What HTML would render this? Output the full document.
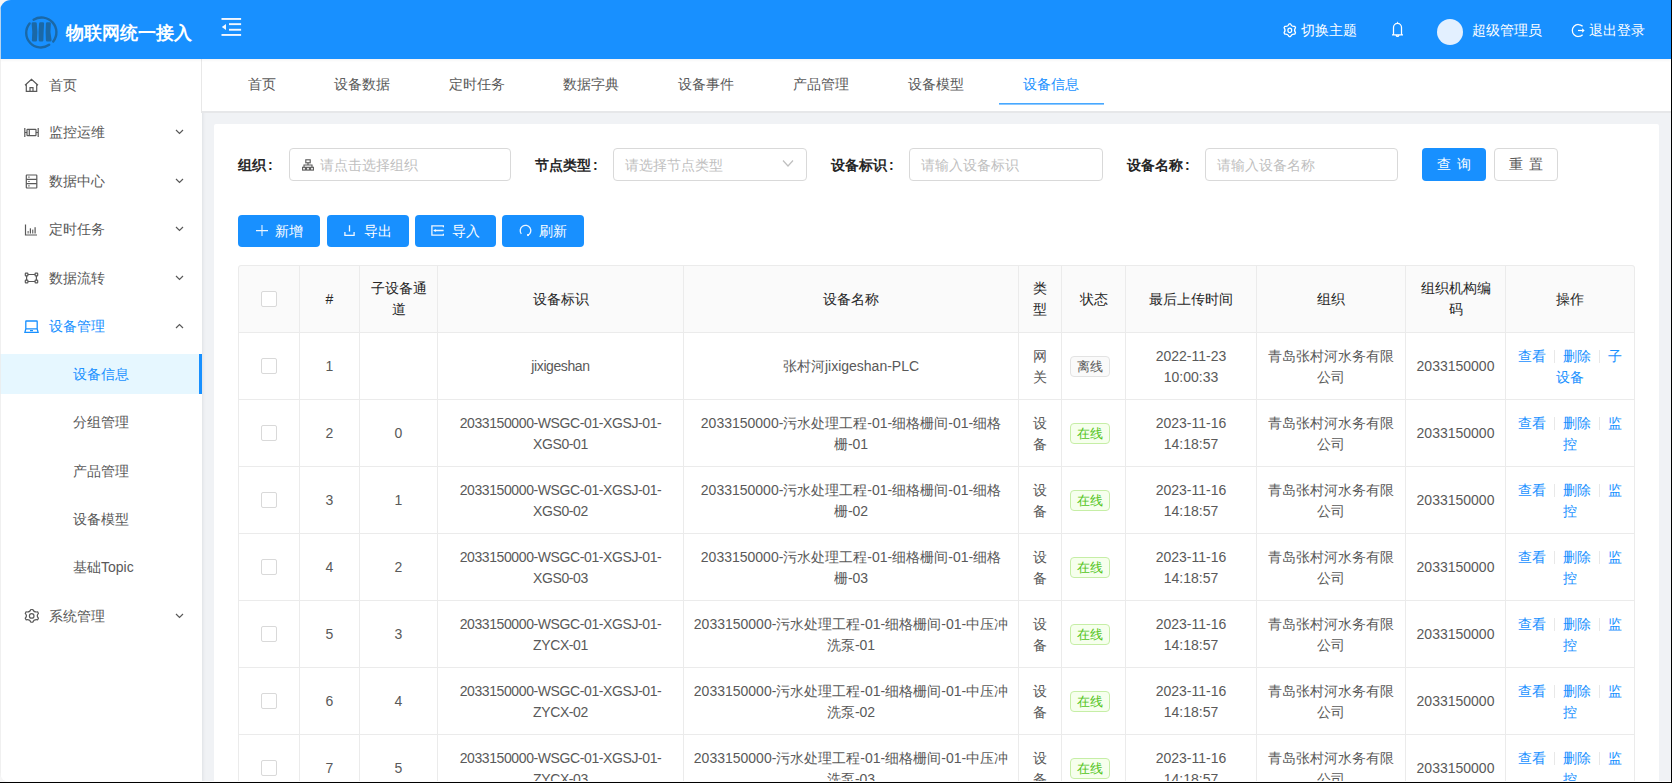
<!DOCTYPE html><html><head><meta charset="utf-8"><title>设备信息</title><style>
*{box-sizing:border-box;margin:0;padding:0}
html,body{width:1672px;height:783px;overflow:hidden;background:#f6f6f6}
body{position:relative;font-family:"Liberation Sans",sans-serif;font-size:14px;color:#595959}
.abs{position:absolute}
#frame{position:absolute;left:0;top:0;width:1671px;height:782px;background:#f0f2f5;border-top-left-radius:11px;border-bottom-left-radius:9px;overflow:hidden}
#header{position:absolute;left:0;top:0;width:1671px;height:59px;background:#1890ff;z-index:2;box-shadow:0 1px 3px rgba(0,21,41,.06)}
#sider{position:absolute;left:0;top:59px;width:202px;height:723px;background:#fff;box-shadow:1px 0 3px rgba(0,21,41,.08)}
.mi{position:absolute;left:0;width:199px;height:40px;line-height:40px;white-space:nowrap;color:#595959}
.mi .ic{position:absolute;left:24px;top:13px;width:15px;height:15px}
.mi .tx{position:absolute;left:49px;top:0}
.mi .ar{position:absolute;left:175px;top:17px;width:9px;height:6px}
.sub .tx{left:73px}
#tabs{position:absolute;left:201px;top:59px;width:1470px;height:54px;background:#fff;border-bottom:2px solid #e6e7e9;border-left:1px solid #e8e8e8}
.tab{position:absolute;top:0;height:52px;line-height:50px;color:#595959;white-space:nowrap}
#card{position:absolute;left:214px;top:124px;width:1445px;height:700px;background:#fff;border-radius:2px}
.lbl{position:absolute;font-weight:bold;color:#262626;white-space:nowrap;line-height:20px}
.inp{position:absolute;border:1px solid #d9d9d9;border-radius:4px;background:#fff;height:33px}
.ph{position:absolute;color:#bfbfbf;white-space:nowrap;line-height:20px}
.btn{position:absolute;top:215px;height:32px;background:#1890ff;border-radius:4px;color:#fff;white-space:nowrap}
.btn .bt{position:absolute;top:6px;line-height:20px}
.vl{position:absolute;width:1px;background:#ebebeb}
.hl{position:absolute;height:1px;background:#ebebeb}
.cell{position:absolute;display:flex;align-items:center;justify-content:center;text-align:center;line-height:21px;color:#595959;white-space:nowrap}
.th{color:#262626}
.ml{line-height:21.5px;padding-top:2.5px}
.cb{position:absolute;width:16px;height:16px;border:1px solid #d9d9d9;border-radius:2px;background:#fff}
.tag{display:inline-block;margin-right:8px;height:21px;line-height:21.5px;font-size:12.5px;padding:0 6px;border-radius:4px;border:1px solid #e3e3e3;background:#fafafa;color:#595959}
.tag.on{border-color:#c6eea6;background:#f6ffed;color:#52c41a}
.lk{color:#1890ff}
.dv{display:inline-block;width:1px;height:13px;background:#e8e8e8;margin:0 8px;vertical-align:-2px}
</style></head><body>
<div id="frame">
<div id="header">
<svg class="abs" style="left:23px;top:15px" width="36" height="36" viewBox="0 0 36 36">
<g fill="none" stroke="#1b68a6" stroke-width="2.4" stroke-linecap="round">
<path d="M10.60 4.71 A14.9 14.9 0 0 1 30.24 26.52"/>
<path d="M6.62 8.47 A14.6 14.6 0 0 0 26.17 29.81"/>
</g>
<g fill="#1b68a6">
<path d="M8.6 8.6 Q8.6 7.3 10.2 7.3 H12.3 Q13.8 7.3 13.8 8.6 Q14.9 17 14 25.3 Q14 26.6 12.6 26.6 H10.3 Q8.9 26.6 8.9 25.3 Q9.8 17 8.6 8.6Z"/>
<path d="M16.1 8.6 Q16.1 7.3 17.5 7.3 H19.8 Q21.1 7.3 21.1 8.6 Q20.6 17 20.4 25.3 Q20.4 26.6 19.1 26.6 H17 Q15.7 26.6 15.7 25.3 Q15.2 17 16.1 8.6Z"/>
<path d="M22.9 8.6 Q22.9 7.3 24.3 7.3 H26.4 Q27.9 7.3 27.9 8.6 Q26.6 17 28.6 25.3 Q28.6 26.6 27.2 26.6 H24.3 Q22.9 26.6 22.9 25.3 Q22.3 17 22.9 8.6Z"/>
</g></svg>
<div class="abs" style="left:66px;top:21px;font-size:18px;font-weight:bold;color:#fff;line-height:24px;white-space:nowrap">物联网统一接入</div>
<svg class="abs" style="left:221px;top:17px" width="22" height="20" viewBox="0 0 22 20">
<g fill="#f2f7ff"><rect x="0.5" y="1" width="19.6" height="1.9"/><rect x="8" y="6.2" width="12.1" height="1.9"/><rect x="8" y="11.8" width="12.1" height="1.9"/><rect x="0.5" y="17" width="19.6" height="1.9"/>
<path d="M0.8 9.9 L5 6.9 L5 13 Z"/></g></svg>
<svg class="abs" style="left:1283px;top:23px" width="14" height="15" viewBox="0 0 14 15"><g fill="none" stroke="#fff" stroke-width="1.25" stroke-linejoin="round">
<path d="M6.05 0.85 L7.55 0.85 Q8.64 3.99 11.82 3.40 L12.58 4.70 Q10.47 7.25 12.58 9.80 L11.82 11.10 Q8.64 10.51 7.55 13.65 L6.05 13.65 Q4.96 10.51 1.78 11.10 L1.02 9.80 Q3.13 7.25 1.02 4.70 L1.78 3.40 Q4.96 3.99 6.05 0.85 L7.55 0.85 Z"/><ellipse cx="6.8" cy="7.3" rx="1.9" ry="2.2"/></g></svg>
<div class="abs" style="left:1301px;top:20px;color:#fff;line-height:20px;white-space:nowrap">切换主题</div>
<svg class="abs" style="left:1391px;top:20px" width="13" height="18" viewBox="0 0 13 18"><g fill="none" stroke="#fff" stroke-width="1.25">
<path d="M2.5 14.8 V7.6 A4 4.2 0 0 1 10.5 7.6 V14.8 M1 14.8 H12 M5.1 15.4 A1.45 1.45 0 0 0 7.9 15.4"/></g><path d="M6.5 1.2 L7.3 3.6 H5.7Z" fill="#fff"/></svg>
<div class="abs" style="left:1437px;top:19px;width:26px;height:26px;border-radius:50%;background:#e3f0ff"></div>
<div class="abs" style="left:1472px;top:20px;color:#fff;line-height:20px;white-space:nowrap">超级管理员</div>
<svg class="abs" style="left:1571px;top:23px" width="15" height="15" viewBox="0 0 15 15"><g fill="none" stroke="#fff" stroke-width="1.25">
<path d="M11.6 3.3 A6 6 0 1 0 11.6 11.7"/><path d="M7 7.5 H11.8"/></g><path d="M11.2 5.3 L13.6 7.5 L11.2 9.7Z" fill="#fff"/></svg>
<div class="abs" style="left:1589px;top:20px;color:#fff;line-height:20px;white-space:nowrap">退出登录</div>
</div>
<div id="sider">
<div class="mi" style="top:6px;color:#595959"><svg class="ic" viewBox="0 0 15 15"><g fill="none" stroke="#595959" stroke-width="1.2"><path d="M1 7.3 L7.5 1.2 L14 7.3 M2.3 6.2 V13.4 H12.7 V6.2 M6 13.4 V9.6 H9 V13.4"/></g></svg><span class="tx">首页</span></div>
<div class="mi" style="top:53px;color:#595959"><svg class="ic" viewBox="0 0 15 15"><g fill="none" stroke="#595959" stroke-width="1.2"><path d="M0.8 3 V12 M14.2 3 V12 M0.8 7.5 H3 M12 7.5 H14.2"/><rect x="3" y="4.3" width="9" height="6.4" rx="0.6"/><path d="M5.3 4.3 V10.7"/></g></svg><span class="tx">监控运维</span><svg class="ar" viewBox="0 0 9 6"><path d="M1 1 L4.5 4.5 L8 1" fill="none" stroke="#595959" stroke-width="1.2"/></svg></div>
<div class="mi" style="top:102px;color:#595959"><svg class="ic" viewBox="0 0 15 15"><g fill="none" stroke="#595959" stroke-width="1.2"><rect x="2.3" y="1" width="10.5" height="13" rx="0.5"/><path d="M2.3 5.3 H12.8 M2.3 9.7 H12.8 M4.3 3.2 H5.6 M4.3 7.5 H5.6 M4.3 11.9 H5.6"/></g></svg><span class="tx">数据中心</span><svg class="ar" viewBox="0 0 9 6"><path d="M1 1 L4.5 4.5 L8 1" fill="none" stroke="#595959" stroke-width="1.2"/></svg></div>
<div class="mi" style="top:150px;color:#595959"><svg class="ic" viewBox="0 0 15 15"><g fill="none" stroke="#595959" stroke-width="1.2"><path d="M1.5 2.5 V13 H13"/></g><g fill="#595959"><rect x="3.6" y="9" width="1" height="2.5"/><rect x="5.8" y="6.3" width="1.2" height="5.2"/><rect x="8.2" y="7.6" width="1.1" height="3.9"/><rect x="10.5" y="5.2" width="1.2" height="6.3"/></g></svg><span class="tx">定时任务</span><svg class="ar" viewBox="0 0 9 6"><path d="M1 1 L4.5 4.5 L8 1" fill="none" stroke="#595959" stroke-width="1.2"/></svg></div>
<div class="mi" style="top:199px;color:#595959"><svg class="ic" viewBox="0 0 15 15"><g fill="none" stroke="#595959" stroke-width="1.2"><rect x="1.3" y="2.2" width="2.6" height="2.6" rx="0.6"/><rect x="11.1" y="2.2" width="2.6" height="2.6" rx="0.6"/><rect x="1.3" y="9.2" width="2.6" height="2.6" rx="0.6"/><rect x="11.1" y="9.2" width="2.6" height="2.6" rx="0.6"/><path d="M3.9 3.5 H11.1 M3.9 10.5 H11.1 M2.6 4.8 V9.2 M12.4 4.8 V9.2"/></g></svg><span class="tx">数据流转</span><svg class="ar" viewBox="0 0 9 6"><path d="M1 1 L4.5 4.5 L8 1" fill="none" stroke="#595959" stroke-width="1.2"/></svg></div>
<div class="mi" style="top:247px;color:#1890ff"><svg class="ic" viewBox="0 0 15 15"><g fill="none" stroke="#1890ff" stroke-width="1.3"><rect x="1.8" y="2" width="11.4" height="7.8" rx="0.4"/><path d="M1.8 9.8 L0.9 13.3 H14.1 L13.2 9.8"/><path d="M6 11.6 H9"/></g></svg><span class="tx">设备管理</span><svg class="ar" viewBox="0 0 9 6"><path d="M1 5 L4.5 1.5 L8 5" fill="none" stroke="#595959" stroke-width="1.2"/></svg></div>
<div class="mi sub" style="top:295px;width:202px;background:#e6f7ff;color:#1890ff"><span class="tx">设备信息</span><div class="abs" style="right:0;top:0;width:3px;height:40px;background:#1890ff"></div></div>
<div class="mi sub" style="top:343px"><span class="tx">分组管理</span></div>
<div class="mi sub" style="top:392px"><span class="tx">产品管理</span></div>
<div class="mi sub" style="top:440px"><span class="tx">设备模型</span></div>
<div class="mi sub" style="top:488px"><span class="tx">基础Topic</span></div>
<div class="mi" style="top:537px"><svg class="ic" viewBox="0 0 15 15"><g fill="none" stroke="#595959" stroke-width="1.2" stroke-linejoin="round"><path d="M6.95 0.45 L8.75 0.45 Q9.96 3.59 13.64 2.85 L14.46 4.45 Q12.07 6.85 14.46 9.25 L13.64 10.85 Q9.96 10.11 8.75 13.25 L6.95 13.25 Q5.74 10.11 2.06 10.85 L1.24 9.25 Q3.63 6.85 1.24 4.45 L2.06 2.85 Q5.74 3.59 6.95 0.45 L8.75 0.45 Z"/><circle cx="7.7" cy="6.9" r="2.3"/></g></svg><span class="tx">系统管理</span><svg class="ar" viewBox="0 0 9 6"><path d="M1 1 L4.5 4.5 L8 1" fill="none" stroke="#595959" stroke-width="1.2"/></svg></div>
</div>
<div id="tabs">
<div class="tab" style="left:45.6px;color:#595959">首页</div>
<div class="tab" style="left:132.3px;color:#595959">设备数据</div>
<div class="tab" style="left:246.6px;color:#595959">定时任务</div>
<div class="tab" style="left:361.0px;color:#595959">数据字典</div>
<div class="tab" style="left:476.0px;color:#595959">设备事件</div>
<div class="tab" style="left:591.0px;color:#595959">产品管理</div>
<div class="tab" style="left:706.0px;color:#595959">设备模型</div>
<div class="tab" style="left:821.0px;color:#1890ff">设备信息</div>
<div class="abs" style="left:797px;top:44px;width:105px;height:1px;background:#47a8ff"></div><div class="abs" style="left:797px;top:45px;width:105px;height:1px;background:#8cc8ff"></div>
</div>
<div id="card"></div>
<div class="lbl" style="left:238px;top:155px">组织<span style="margin-left:2px">:</span></div>
<div class="inp" style="left:289px;top:148px;width:222px"></div>
<svg class="abs" style="left:302px;top:159px" width="12" height="12" viewBox="0 0 12 12"><g fill="none" stroke="#595959" stroke-width="1.1"><rect x="3.8" y="0.8" width="4.4" height="3"/><path d="M6 3.8 V6 M2 8.3 V6 H10 V8.3"/><rect x="0.6" y="8.3" width="2.8" height="2.8"/><rect x="4.6" y="8.3" width="2.8" height="2.8"/><rect x="8.6" y="8.3" width="2.8" height="2.8"/></g></svg>
<div class="ph" style="left:320px;top:155px">请点击选择组织</div>
<div class="lbl" style="left:535px;top:155px">节点类型<span style="margin-left:2px">:</span></div>
<div class="inp" style="left:613px;top:148px;width:194px"></div>
<div class="ph" style="left:625px;top:155px">请选择节点类型</div>
<svg class="abs" style="left:782px;top:159px" width="12" height="9" viewBox="0 0 12 9"><path d="M1 1.5 L6 7 L11 1.5" fill="none" stroke="#bfbfbf" stroke-width="1.2"/></svg>
<div class="lbl" style="left:831px;top:155px">设备标识<span style="margin-left:2px">:</span></div>
<div class="inp" style="left:909px;top:148px;width:194px"></div>
<div class="ph" style="left:921px;top:155px">请输入设备标识</div>
<div class="lbl" style="left:1127px;top:155px">设备名称<span style="margin-left:2px">:</span></div>
<div class="inp" style="left:1205px;top:148px;width:193px"></div>
<div class="ph" style="left:1217px;top:155px">请输入设备名称</div>
<div class="abs" style="left:1422px;top:148px;width:64px;height:33px;background:#1890ff;border-radius:4px;color:#fff;text-align:center;line-height:32px;letter-spacing:6px;text-indent:6px">查询</div>
<div class="abs" style="left:1494px;top:148px;width:64px;height:33px;background:#fff;border:1px solid #d9d9d9;border-radius:4px;color:#595959;text-align:center;line-height:30px;letter-spacing:6px;text-indent:6px">重置</div>
<div class="btn" style="left:238px;width:82px"><svg class="abs" style="left:18px;top:10px" width="12" height="11" viewBox="0 0 12 11"><path d="M6 0 V11 M0 5.6 H12" stroke="#eef6ff" stroke-width="1.05"/></svg><span class="bt" style="left:37px">新增</span></div>
<div class="btn" style="left:327px;width:82px"><svg class="abs" style="left:17px;top:10px" width="11" height="11" viewBox="0 0 11 11"><path d="M5.5 0.2 V6.6 M0.9 7 V10.3 H10.1 V7" fill="none" stroke="#f2f8ff" stroke-width="1.3"/></svg><span class="bt" style="left:37px">导出</span></div>
<div class="btn" style="left:415px;width:81px"><svg class="abs" style="left:16px;top:10px" width="13" height="11" viewBox="0 0 13 11"><path d="M12.4 2.3 V0.8 H0.9 V10.2 H12.4 V8.7 M4 5.5 H12.6" fill="none" stroke="#eef6ff" stroke-width="1.3"/><path d="M2.2 5.5 L4.6 4 V7 Z" fill="#fff"/></svg><span class="bt" style="left:37px">导入</span></div>
<div class="btn" style="left:502px;width:82px"><svg class="abs" style="left:17px;top:9px" width="13" height="13" viewBox="0 0 13 13"><path d="M2.32 9.86 A5.3 5.3 0 1 1 8.99 11.28" fill="none" stroke="#eef6ff" stroke-width="1.3"/><circle cx="9" cy="11.1" r="1.05" fill="#fff"/></svg><span class="bt" style="left:37px">刷新</span></div>
<div class="abs" style="left:238px;top:265px;width:1397px;height:67px;background:#fafafa;border-top-left-radius:3px;border-top-right-radius:3px"></div>
<div class="vl" style="left:299px;top:265px;height:520px"></div>
<div class="vl" style="left:359px;top:265px;height:520px"></div>
<div class="vl" style="left:437px;top:265px;height:520px"></div>
<div class="vl" style="left:683px;top:265px;height:520px"></div>
<div class="vl" style="left:1018px;top:265px;height:520px"></div>
<div class="vl" style="left:1061px;top:265px;height:520px"></div>
<div class="vl" style="left:1125px;top:265px;height:520px"></div>
<div class="vl" style="left:1256px;top:265px;height:520px"></div>
<div class="vl" style="left:1405px;top:265px;height:520px"></div>
<div class="vl" style="left:1505px;top:265px;height:520px"></div>
<div class="abs" style="left:238px;top:265px;width:1397px;height:540px;border:1px solid #ebebeb;border-radius:3px"></div>
<div class="hl" style="left:238px;top:332px;width:1397px"></div>
<div class="hl" style="left:238px;top:399px;width:1397px"></div>
<div class="hl" style="left:238px;top:466px;width:1397px"></div>
<div class="hl" style="left:238px;top:533px;width:1397px"></div>
<div class="hl" style="left:238px;top:600px;width:1397px"></div>
<div class="hl" style="left:238px;top:667px;width:1397px"></div>
<div class="hl" style="left:238px;top:734px;width:1397px"></div>
<div class="hl" style="left:238px;top:801px;width:1397px"></div>
<div class="cell th" style="left:239px;top:266px;width:60px;height:66px;"><span class="cb" style="position:static;display:inline-block"></span></div>
<div class="cell th" style="left:300px;top:266px;width:59px;height:66px;">#</div>
<div class="cell th" style="left:360px;top:266px;width:77px;height:66px;">子设备通<br>道</div>
<div class="cell th" style="left:438px;top:266px;width:245px;height:66px;">设备标识</div>
<div class="cell th" style="left:684px;top:266px;width:334px;height:66px;">设备名称</div>
<div class="cell th" style="left:1019px;top:266px;width:42px;height:66px;">类<br>型</div>
<div class="cell th" style="left:1062px;top:266px;width:63px;height:66px;">状态</div>
<div class="cell th" style="left:1126px;top:266px;width:130px;height:66px;">最后上传时间</div>
<div class="cell th" style="left:1257px;top:266px;width:148px;height:66px;">组织</div>
<div class="cell th" style="left:1406px;top:266px;width:99px;height:66px;">组织机构编<br>码</div>
<div class="cell th" style="left:1506px;top:266px;width:128px;height:66px;">操作</div>
<div class="cell" style="left:239px;top:333px;width:60px;height:66px;"><span class="cb" style="position:static;display:inline-block"></span></div>
<div class="cell" style="left:300px;top:333px;width:59px;height:66px;">1</div>
<div class="cell" style="left:360px;top:333px;width:77px;height:66px;"></div>
<div class="cell" style="left:438px;top:333px;width:245px;height:66px;;letter-spacing:-0.4px">jixigeshan</div>
<div class="cell" style="left:684px;top:333px;width:334px;height:66px;">张村河jixigeshan-PLC</div>
<div class="cell ml" style="left:1019px;top:333px;width:42px;height:66px;">网<br>关</div>
<div class="cell" style="left:1062px;top:333px;width:63px;height:66px;"><span class="tag">离线</span></div>
<div class="cell ml" style="left:1126px;top:333px;width:130px;height:66px;">2022-11-23<br>10:00:33</div>
<div class="cell ml" style="left:1257px;top:333px;width:148px;height:66px;">青岛张村河水务有限<br>公司</div>
<div class="cell" style="left:1406px;top:333px;width:99px;height:66px;">2033150000</div>
<div class="cell ml" style="left:1506px;top:333px;width:128px;height:66px;"><div><span class="lk">查看</span><span class="dv"></span><span class="lk">删除</span><span class="dv"></span><span class="lk">子</span><br><span class="lk">设备</span></div></div>
<div class="cell" style="left:239px;top:400px;width:60px;height:66px;"><span class="cb" style="position:static;display:inline-block"></span></div>
<div class="cell" style="left:300px;top:400px;width:59px;height:66px;">2</div>
<div class="cell" style="left:360px;top:400px;width:77px;height:66px;">0</div>
<div class="cell ml" style="left:438px;top:400px;width:245px;height:66px;;letter-spacing:-0.4px">2033150000-WSGC-01-XGSJ-01-<br>XGS0-01</div>
<div class="cell ml" style="left:684px;top:400px;width:334px;height:66px;">2033150000-污水处理工程-01-细格栅间-01-细格<br>栅-01</div>
<div class="cell ml" style="left:1019px;top:400px;width:42px;height:66px;">设<br>备</div>
<div class="cell" style="left:1062px;top:400px;width:63px;height:66px;"><span class="tag on">在线</span></div>
<div class="cell ml" style="left:1126px;top:400px;width:130px;height:66px;">2023-11-16<br>14:18:57</div>
<div class="cell ml" style="left:1257px;top:400px;width:148px;height:66px;">青岛张村河水务有限<br>公司</div>
<div class="cell" style="left:1406px;top:400px;width:99px;height:66px;">2033150000</div>
<div class="cell ml" style="left:1506px;top:400px;width:128px;height:66px;"><div><span class="lk">查看</span><span class="dv"></span><span class="lk">删除</span><span class="dv"></span><span class="lk">监</span><br><span class="lk">控</span></div></div>
<div class="cell" style="left:239px;top:467px;width:60px;height:66px;"><span class="cb" style="position:static;display:inline-block"></span></div>
<div class="cell" style="left:300px;top:467px;width:59px;height:66px;">3</div>
<div class="cell" style="left:360px;top:467px;width:77px;height:66px;">1</div>
<div class="cell ml" style="left:438px;top:467px;width:245px;height:66px;;letter-spacing:-0.4px">2033150000-WSGC-01-XGSJ-01-<br>XGS0-02</div>
<div class="cell ml" style="left:684px;top:467px;width:334px;height:66px;">2033150000-污水处理工程-01-细格栅间-01-细格<br>栅-02</div>
<div class="cell ml" style="left:1019px;top:467px;width:42px;height:66px;">设<br>备</div>
<div class="cell" style="left:1062px;top:467px;width:63px;height:66px;"><span class="tag on">在线</span></div>
<div class="cell ml" style="left:1126px;top:467px;width:130px;height:66px;">2023-11-16<br>14:18:57</div>
<div class="cell ml" style="left:1257px;top:467px;width:148px;height:66px;">青岛张村河水务有限<br>公司</div>
<div class="cell" style="left:1406px;top:467px;width:99px;height:66px;">2033150000</div>
<div class="cell ml" style="left:1506px;top:467px;width:128px;height:66px;"><div><span class="lk">查看</span><span class="dv"></span><span class="lk">删除</span><span class="dv"></span><span class="lk">监</span><br><span class="lk">控</span></div></div>
<div class="cell" style="left:239px;top:534px;width:60px;height:66px;"><span class="cb" style="position:static;display:inline-block"></span></div>
<div class="cell" style="left:300px;top:534px;width:59px;height:66px;">4</div>
<div class="cell" style="left:360px;top:534px;width:77px;height:66px;">2</div>
<div class="cell ml" style="left:438px;top:534px;width:245px;height:66px;;letter-spacing:-0.4px">2033150000-WSGC-01-XGSJ-01-<br>XGS0-03</div>
<div class="cell ml" style="left:684px;top:534px;width:334px;height:66px;">2033150000-污水处理工程-01-细格栅间-01-细格<br>栅-03</div>
<div class="cell ml" style="left:1019px;top:534px;width:42px;height:66px;">设<br>备</div>
<div class="cell" style="left:1062px;top:534px;width:63px;height:66px;"><span class="tag on">在线</span></div>
<div class="cell ml" style="left:1126px;top:534px;width:130px;height:66px;">2023-11-16<br>14:18:57</div>
<div class="cell ml" style="left:1257px;top:534px;width:148px;height:66px;">青岛张村河水务有限<br>公司</div>
<div class="cell" style="left:1406px;top:534px;width:99px;height:66px;">2033150000</div>
<div class="cell ml" style="left:1506px;top:534px;width:128px;height:66px;"><div><span class="lk">查看</span><span class="dv"></span><span class="lk">删除</span><span class="dv"></span><span class="lk">监</span><br><span class="lk">控</span></div></div>
<div class="cell" style="left:239px;top:601px;width:60px;height:66px;"><span class="cb" style="position:static;display:inline-block"></span></div>
<div class="cell" style="left:300px;top:601px;width:59px;height:66px;">5</div>
<div class="cell" style="left:360px;top:601px;width:77px;height:66px;">3</div>
<div class="cell ml" style="left:438px;top:601px;width:245px;height:66px;;letter-spacing:-0.4px">2033150000-WSGC-01-XGSJ-01-<br>ZYCX-01</div>
<div class="cell ml" style="left:684px;top:601px;width:334px;height:66px;">2033150000-污水处理工程-01-细格栅间-01-中压冲<br>洗泵-01</div>
<div class="cell ml" style="left:1019px;top:601px;width:42px;height:66px;">设<br>备</div>
<div class="cell" style="left:1062px;top:601px;width:63px;height:66px;"><span class="tag on">在线</span></div>
<div class="cell ml" style="left:1126px;top:601px;width:130px;height:66px;">2023-11-16<br>14:18:57</div>
<div class="cell ml" style="left:1257px;top:601px;width:148px;height:66px;">青岛张村河水务有限<br>公司</div>
<div class="cell" style="left:1406px;top:601px;width:99px;height:66px;">2033150000</div>
<div class="cell ml" style="left:1506px;top:601px;width:128px;height:66px;"><div><span class="lk">查看</span><span class="dv"></span><span class="lk">删除</span><span class="dv"></span><span class="lk">监</span><br><span class="lk">控</span></div></div>
<div class="cell" style="left:239px;top:668px;width:60px;height:66px;"><span class="cb" style="position:static;display:inline-block"></span></div>
<div class="cell" style="left:300px;top:668px;width:59px;height:66px;">6</div>
<div class="cell" style="left:360px;top:668px;width:77px;height:66px;">4</div>
<div class="cell ml" style="left:438px;top:668px;width:245px;height:66px;;letter-spacing:-0.4px">2033150000-WSGC-01-XGSJ-01-<br>ZYCX-02</div>
<div class="cell ml" style="left:684px;top:668px;width:334px;height:66px;">2033150000-污水处理工程-01-细格栅间-01-中压冲<br>洗泵-02</div>
<div class="cell ml" style="left:1019px;top:668px;width:42px;height:66px;">设<br>备</div>
<div class="cell" style="left:1062px;top:668px;width:63px;height:66px;"><span class="tag on">在线</span></div>
<div class="cell ml" style="left:1126px;top:668px;width:130px;height:66px;">2023-11-16<br>14:18:57</div>
<div class="cell ml" style="left:1257px;top:668px;width:148px;height:66px;">青岛张村河水务有限<br>公司</div>
<div class="cell" style="left:1406px;top:668px;width:99px;height:66px;">2033150000</div>
<div class="cell ml" style="left:1506px;top:668px;width:128px;height:66px;"><div><span class="lk">查看</span><span class="dv"></span><span class="lk">删除</span><span class="dv"></span><span class="lk">监</span><br><span class="lk">控</span></div></div>
<div class="cell" style="left:239px;top:735px;width:60px;height:66px;"><span class="cb" style="position:static;display:inline-block"></span></div>
<div class="cell" style="left:300px;top:735px;width:59px;height:66px;">7</div>
<div class="cell" style="left:360px;top:735px;width:77px;height:66px;">5</div>
<div class="cell ml" style="left:438px;top:735px;width:245px;height:66px;;letter-spacing:-0.4px">2033150000-WSGC-01-XGSJ-01-<br>ZYCX-03</div>
<div class="cell ml" style="left:684px;top:735px;width:334px;height:66px;">2033150000-污水处理工程-01-细格栅间-01-中压冲<br>洗泵-03</div>
<div class="cell ml" style="left:1019px;top:735px;width:42px;height:66px;">设<br>备</div>
<div class="cell" style="left:1062px;top:735px;width:63px;height:66px;"><span class="tag on">在线</span></div>
<div class="cell ml" style="left:1126px;top:735px;width:130px;height:66px;">2023-11-16<br>14:18:57</div>
<div class="cell ml" style="left:1257px;top:735px;width:148px;height:66px;">青岛张村河水务有限<br>公司</div>
<div class="cell" style="left:1406px;top:735px;width:99px;height:66px;">2033150000</div>
<div class="cell ml" style="left:1506px;top:735px;width:128px;height:66px;"><div><span class="lk">查看</span><span class="dv"></span><span class="lk">删除</span><span class="dv"></span><span class="lk">监</span><br><span class="lk">控</span></div></div>
<div class="abs" style="left:0;top:0;width:1px;height:782px;background:rgba(235,235,235,.75);z-index:3"></div>
<div class="abs" style="left:0;top:781px;width:1671px;height:1px;background:#fcfcfc;z-index:3"></div>
</div>
<div class="abs" style="left:1671px;top:0;width:1px;height:783px;background:#000"></div>
<div class="abs" style="left:0;top:782px;width:1672px;height:1px;background:#000"></div>
</body></html>
